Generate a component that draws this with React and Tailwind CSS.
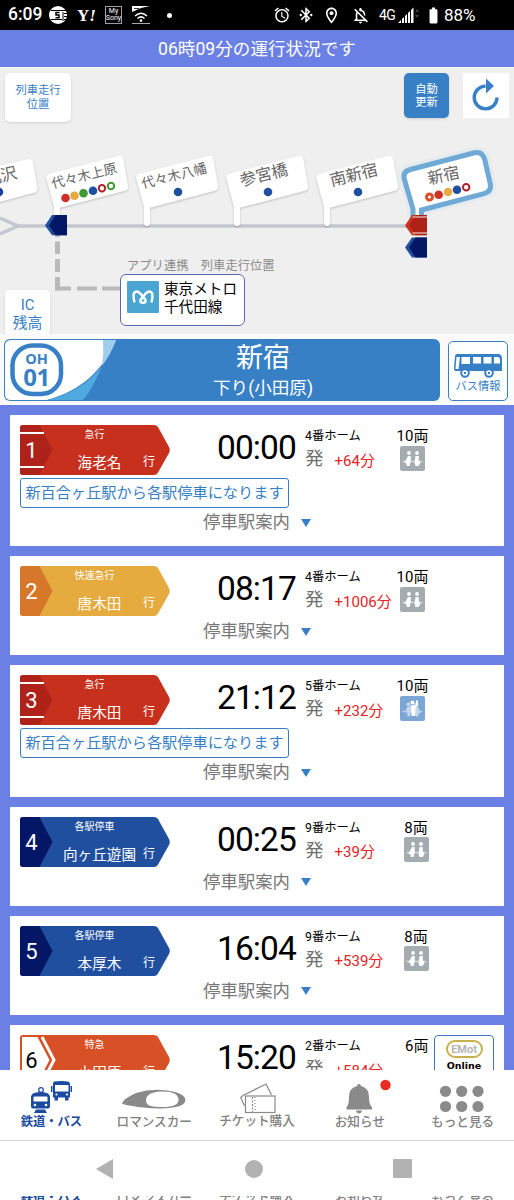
import React from "react";
import {
  MdAlarm,
  MdBluetoothConnected,
  MdOutlineLocationOn,
  MdOutlineNotificationsOff,
  MdBatteryFull,
} from "react-icons/md";

function StatusBar() {
  return (
    <div className="flex h-[30px] shrink-0 items-center bg-black pl-2 text-white">
      <span className="w-[34px] text-[17.5px] leading-none font-medium">6:09</span>
      <svg className="ml-[7px]" width="19" height="18" viewBox="0 0 19 18">
        <circle cx="9" cy="9" r="9" fill="#fff" />
        <path d="M2 4.500H19M2 13.500H13M14 6v9M15 7.500h4M15 10.500h4M15 13.500h4" stroke="#000" strokeWidth="1" />
        <path d="M10.500 6.500H7v2.600h3v2.700H6.500" stroke="#000" strokeWidth="1.500" fill="none" />
      </svg>
      <span className="ml-[9px] w-[20px] font-['Liberation_Serif',serif] text-[17px] leading-none font-bold whitespace-nowrap">
        Y<i>!</i>
      </span>
      <span className="ml-[8px] flex h-[18px] w-[17px] flex-col items-center justify-center border border-neutral-400 text-[7px] leading-[7px]">
        <span>My</span>
        <span>Sony</span>
      </span>
      <svg className="ml-[10px]" width="18" height="18" viewBox="0 0 18 18" fill="none" stroke="#fff">
        <path d="M0 0H18L9 2L0 6z" fill="#fff" stroke="none" />
        <path d="M2 2.5h5" stroke="#333" />
        <path d="M3 10q6-5.500 12 0M5.500 12.500q3.500-3.200 7 0" strokeWidth="1.500" />
        <circle cx="9" cy="14.600" r="1.300" fill="#fff" stroke="none" />
        <path d="M0 17.500H18" stroke="#aaa" />
      </svg>
      <span className="ml-[17px] size-[5px] rounded-full bg-white" />
      <MdAlarm className="ml-[101px] size-[18px]" />
      <MdBluetoothConnected className="ml-[6px] size-[18px]" />
      <MdOutlineLocationOn className="ml-[7px] size-[19px]" />
      <MdOutlineNotificationsOff className="ml-[10px] size-[19px]" />
      <span className="ml-[9px] w-[18px] text-[14px] leading-none tracking-[-0.5px]">4G</span>
      <svg className="ml-px" width="22" height="17" viewBox="0 0 22 17">
        <path d="M0 16L3 13v3zM4 12l2-2v6H4zM7 9l2-2v9H7zM10 6l2-2v12h-2zM13 3l2.500-2.500V16H13z" fill="#fff" />
        <path d="M17 5l2-3 2 3zM17 8l2 3 2-3z" fill="#444" />
      </svg>
      <MdBatteryFull className="ml-[4px] size-[19px]" />
      <span className="ml-[1px] text-[17px] leading-none">88%</span>
    </div>
  );
}

const SIGN = "M144 207L136.300 178.500Q135.400 174.700 139 173.700L208.500 155.800Q212.400 154.900 213.400 158.800L218 186Q218.600 189.700 215 190.700L150 207.800V223a3 3 0 0 1-6 0z";
const CURRENT = "M413 222V209L404.300 179Q402.500 171.500 410.500 169.500L473.500 153Q482 150.500 484.700 159.500L490.300 184Q491.700 191.500 484 193.700L421.500 210V222";

const signs = [
  { dx: -90, label: "代々木上原", size: 13.4 },
  { dx: 0, label: "代々木八幡", size: 13.4, dot: true },
  { dx: 90, label: "参宮橋", size: 16.3, dot: true },
  { dx: 180, label: "南新宿", size: 16.3, dot: true },
];

function LineMap() {
  return (
    <svg className="absolute inset-0" width="514" height="266" viewBox="0 68 514 266">
      <path d="M0 218L18 226L0 234" fill="none" stroke="#c6c7ce" strokeWidth="3.500" />
      <path d="M15 226H410" stroke="#c6c7ce" strokeWidth="3.500" />
      <path d="M57.500 234V237M57.500 241.500V254M57.500 259V272M57.500 277V290.500" stroke="#b9b9b9" strokeWidth="5" />
      <path d="M55 288.500H71M77 288.500H97M102 288.500H121" stroke="#b9b9b9" strokeWidth="4" />
      <g style={{ filter: "drop-shadow(0 1px 1px rgba(0,0,0,.2))" }} fill="#fff">
        <path d="M-34 173L28 159Q32 158.300 33 162L37.500 188Q38 191.500 35 192.500L-34 211z" />
        {signs.map((s) => (
          <path key={s.label} d={SIGN} transform={`translate(${s.dx} 0)`} />
        ))}
      </g>
      <g fill="#666" textAnchor="middle">
        <text x="-7" y="184" fontSize="16.300" transform="rotate(-14 -7 178)">下北沢</text>
        {signs.map((s) => (
          <g key={s.label} transform={`translate(${s.dx} 0)`}>
            <text x="174" y="180.500" fontSize={s.size} transform="rotate(-14 174 175.500)">
              {s.label}
            </text>
            {s.dot && <circle cx="178" cy="192" r="4.300" fill="#1f4f9e" />}
          </g>
        ))}
      </g>
      <circle cx="-1" cy="192" r="4.300" fill="#1f3f9e" />
      <circle cx="65.500" cy="198" r="4.300" fill="#cf3028" />
      <circle cx="74.500" cy="195.800" r="4.300" fill="#e7a944" />
      <circle cx="83.500" cy="193.200" r="4.300" fill="#3f9a33" />
      <circle cx="93" cy="190.700" r="4.300" fill="#1f4f9e" />
      <circle cx="102" cy="188.300" r="3.200" fill="#fff" stroke="#b3202a" strokeWidth="2" />
      <circle cx="111" cy="186" r="3.200" fill="#fff" stroke="#3f9a33" strokeWidth="2" />

      <path d={CURRENT} fill="none" stroke="#e4ebef" strokeWidth="11" />
      <path d={CURRENT} fill="#fff" stroke="#6fa9d6" strokeWidth="5" />
      <text x="443.500" y="181" fontSize="16" fill="#666" textAnchor="middle" transform="rotate(-12 443.500 175)">新宿</text>
      <circle cx="429.500" cy="197" r="3" fill="#fff" stroke="#dc5028" strokeWidth="3" />
      <circle cx="438.700" cy="194.700" r="4.300" fill="#cb3426" />
      <circle cx="448" cy="192" r="4.300" fill="#e7a944" />
      <circle cx="457" cy="189.700" r="4.300" fill="#1f4f9e" />
      <circle cx="466.200" cy="187.200" r="3.200" fill="#fff" stroke="#b3202a" strokeWidth="2" />

      <path d="M45 225.500L52 215H67V235.300H52z" fill="#1f4f9e" />
      <path d="M49 225.500L55.500 215H67V235.300H55.500z" fill="#041766" />
      <path d="M405 225.500L412 215H427V235.300H412z" fill="#cc321f" />
      <path d="M409 225.500L415.500 215H427V235.300H415.500z" fill="#ae2116" />
      <path d="M412.500 217H427M412.500 233H427" stroke="#fff" strokeWidth="1.200" opacity=".9" />
      <path d="M405 247.500L412 237.500H427V257.500H412z" fill="#1f4f9e" />
      <path d="M409 247.500L415.500 237.500H427V257.500H415.500z" fill="#041766" />
    </svg>
  );
}

function MapPanel() {
  return (
    <div className="relative h-[266px] shrink-0 overflow-hidden bg-[#efefef]">
      <LineMap />
      <div className="relative flex items-start pt-[5px] pl-[5px]">
        <button className="h-[49px] w-[66px] rounded-[5px] bg-white text-[11.3px] leading-[13.5px] text-[#3880c6] shadow">
          列車走行
          <br />
          位置
        </button>
        <button className="ml-[333px] h-[45px] w-[45px] rounded-[5px] bg-[#3880c6] text-[11.300px] leading-[13px] text-white shadow">
          自動
          <br />
          更新
        </button>
        <button className="ml-[14px] h-[45px] w-[46px] bg-white">
          <svg width="46" height="45" viewBox="0 0 46 45">
            <path d="M34 24.500A11.400 11.400 0 1 1 22.600 13.100" fill="none" stroke="#3880c6" strokeWidth="3.400" />
            <path d="M23 5.500L31 13L23 20.500z" fill="#3880c6" />
          </svg>
        </button>
      </div>
      <div className="absolute top-[190px] left-[127px] text-[12.300px] leading-[16px] whitespace-nowrap text-[#8a8a8a]">
        アプリ連携　列車走行位置
      </div>
      <div className="absolute top-[206px] left-[120px] flex h-[52px] w-[125px] rounded-[6px] border-[1.500px] border-[#5a68b4] bg-white pt-[6px] pl-[6px]">
        <svg width="32" height="32" viewBox="0 0 32 32">
          <rect width="32" height="32" rx="1" fill="#4aa5d2" />
          <path
            d="M7.500 21.500Q4.800 11 9.500 10.500C13.500 10.500 15 15.500 18.300 18.500Q19.500 21.800 16 21.800Q12.500 21.800 13.700 18.500C17 15.500 18.500 10.500 22.500 10.500Q27.200 11 24.500 21.500"
            fill="none"
            stroke="#fff"
            strokeWidth="2.400"
          />
        </svg>
        <div className="ml-[5px] text-[14.600px] leading-[17.500px] whitespace-nowrap text-black">
          東京メトロ
          <br />
          千代田線
        </div>
      </div>
      <button className="absolute top-[222px] left-[5px] h-[45px] w-[45px] rounded-[4px] bg-white pt-[2px] text-[14.800px] leading-[18px] text-[#3880c6] shadow">
        IC
        <br />
        残高
      </button>
    </div>
  );
}

function StationHeader() {
  return (
    <div className="flex h-[71px] shrink-0 items-start bg-[#fafafa] pt-[5px] pl-[4px]">
      <div className="relative h-[62px] w-[436px] overflow-hidden rounded-[6px] bg-[#3880c6]">
        <svg className="absolute inset-0" width="436" height="62" viewBox="0 0 436 62">
          <path d="M7 1H112C98 32 78 51 43 61H7Q1 61 1 55V7Q1 1 7 1z" fill="#fff" />
          <path d="M99 1H112Q107 15 98 27Q100 14 99 1z" fill="#9fcdec" />
          <path d="M98 27C91 43 86 53 79 61H43C66 56 86 43 98 27z" fill="#4fa9df" />
          <rect x="8.500" y="6.500" width="48.500" height="48.500" rx="20" fill="none" stroke="#3880c6" strokeWidth="4.500" />
        </svg>
        <div className="absolute top-[13px] left-[7px] flex w-[51px] flex-col items-center font-['Open_Sans','Noto_Sans',sans-serif] font-bold text-[#3880c6]">
          <span className="text-[14.500px] leading-[13px]">OH</span>
          <span className="text-[24px] leading-[23px] tracking-[-0.500px]">01</span>
        </div>
        <div className="relative flex flex-col items-center pl-[82px] text-white">
          <span className="mt-[3px] text-[27px] leading-[33px]">新宿</span>
          <span className="text-[17.600px] leading-[27px]">下り(小田原)</span>
        </div>
      </div>
      <div className="mt-[2px] ml-[8px] flex h-[60px] w-[60px] flex-col items-center rounded-[5px] border border-[#3880c6] bg-white">
        <svg className="mt-[11px]" width="50" height="26" viewBox="0 0 50 26">
          <path d="M4 1H45Q49 1 49 6V18H2Q1 18 1 15L2 3Q2.500 1 4 1z" fill="#3880c6" />
          <path d="M3.500 4H7L5.500 16H2.500zM8.500 4h8.500v7H8.500zM20 4h8v6.500H20zM30.500 4h8v6.500H30.500zM41 4h4Q47 4 47 6.500V10.500H41z" fill="#fff" />
          <circle cx="12" cy="20" r="3.800" fill="#fff" stroke="#3880c6" strokeWidth="2" />
          <circle cx="36" cy="20" r="3.800" fill="#fff" stroke="#3880c6" strokeWidth="2" />
          <circle cx="12" cy="20" r="1.200" fill="#3880c6" />
          <circle cx="36" cy="20" r="1.200" fill="#3880c6" />
        </svg>
        <span className="text-[11.200px] leading-[15px] text-[#3880c6]">バス情報</span>
      </div>
    </div>
  );
}

const kinds = {
  express: { main: "#c8301e", dark: "#ae2219", bars: true },
  rapid: { main: "#e5ab3f", dark: "#d6772a" },
  local: { main: "#1f4f9e", dark: "#041766" },
  limited: { main: "#d85025", dark: "#ffffff", outline: true },
};

function TrainBadge({ n, kind, type, dest }) {
  const k = kinds[kind];
  return (
    <div className="relative h-[50px] w-[150px] shrink-0 text-white">
      <svg className="absolute inset-0" width="150" height="50" viewBox="0 0 150 50">
        <path d="M3 0H134Q136.500 0 138 2L149 22Q150.500 25 149 28L138 47.500Q136.500 50 134 50H3Q0 50 0 47V3Q0 0 3 0z" fill={k.main} />
        {k.outline ? (
          <>
            <path d="M2 2H17.500L29.500 25L17.500 48H2z" fill="#fff" />
            <path d="M22 2L34 25L22 48" fill="none" stroke="#fff" strokeWidth="3" />
          </>
        ) : (
          <path d="M3 0H19.500L32.500 25L19.500 50H3Q0 50 0 47V3Q0 0 3 0z" fill={k.dark} />
        )}
        {k.bars && <path d="M0 8H24M0 42H24" stroke="#fff" strokeWidth="2" />}
      </svg>
      <div className="relative grid h-full grid-cols-[23px_115px] items-center">
        <span className={k.outline ? "pt-[2px] text-center text-[22px] leading-none text-black" : "pt-[2px] text-center text-[22px] leading-none"}>
          {n}
        </span>
        <div className="relative h-full">
          <div className="mr-[12px] pt-[3px] text-center text-[10px] leading-[14px]">{type}</div>
          <div className="mt-[12px] text-center text-[14.600px] leading-[18px]">
            <span className="mr-0.5">{dest}</span>
          </div>
          <span className="absolute top-[28px] right-[3px] text-[12px] leading-[18px]">行</span>
        </div>
      </div>
    </div>
  );
}

function Crowding({ busy }) {
  return (
    <svg width="25" height="25" viewBox="0 0 25 25">
      <rect width="25" height="25" rx="2" fill={busy ? "#7ba6d5" : "#a5acb0"} />
      <path d="M2.500 15.500H22.500" stroke={busy ? "#b7cfe8" : "#d3d7d9"} strokeWidth="1.500" />
      {busy ? (
        <>
          <g fill="#c4d8ed">
            <circle cx="8.500" cy="8.500" r="2" />
            <path d="M7 11h4l-1 9.500H7.500L7 14l-2.500 4z" />
            <circle cx="16.500" cy="8.500" r="2" />
            <path d="M15 11h3.500l2 7-2-1v3.500h-2.500z" />
          </g>
          <g fill="#fff">
            <circle cx="12.500" cy="6.500" r="2" />
            <path d="M10.500 9.500L14.500 9l1.500-.5V4.500h2l-.2 5.500-2.300 1.500V20h-4z" />
          </g>
        </>
      ) : (
        <g fill="#fff">
          <circle cx="9" cy="7" r="1.900" />
          <path d="M8 10H10.800V15L9.500 20H6.800L6.500 17.500L4.500 16.500z" />
          <circle cx="17" cy="7" r="1.900" />
          <path d="M15.500 10H18.800V14L20.500 17L18.500 20H15.500L14.500 16.500z" />
        </g>
      )}
    </svg>
  );
}

function TrainCard({ t }) {
  return (
    <div className={t.note ? "h-[131.250px] shrink-0 bg-white px-[10px] pt-[10px]" : "h-[99.200px] shrink-0 bg-white px-[10px] pt-[10px]"}>
      <div className="flex h-[50px]">
        <TrainBadge n={t.n} kind={t.kind} type={t.type} dest={t.dest} />
        <span className="ml-[47px] w-[88px] pt-[3px] text-[33.500px] leading-[40px] tracking-[-0.900px] text-black">{t.time}</span>
        <div className="flex w-[92px] flex-col pt-[3px] whitespace-nowrap">
          <span className="text-[12.300px] leading-[16px] text-black">{t.platform}番ホーム</span>
          <div className="mt-[3px] flex items-center">
            <span className="text-[18.500px] leading-[24px] text-[#707070]">発</span>
            <span className="mt-[3px] ml-[11px] text-[15px] leading-[20px] text-[#e6231f]">+{t.delay}分</span>
          </div>
        </div>
        <div className="flex w-[31.500px] justify-end">
          <div className="flex flex-col items-center">
            <span className="pt-[2px] text-[15px] leading-[18.500px] whitespace-nowrap text-black">{t.cars}両</span>
            {!t.emot && <Crowding busy={t.busy} />}
          </div>
        </div>
        {t.emot && (
          <div className="ml-[5.500px] flex h-[60px] w-[60px] shrink-0 flex-col items-center rounded-[4px] border border-[#4a72c4] bg-white pt-[4px]">
            <span className="flex h-[18px] w-[37px] items-center justify-center rounded-full border-2 border-[#c9b04e] bg-white text-[11px] leading-none font-bold text-[#b5b5b5]">
              EMot
            </span>
            <span className="mt-[1px] font-['DejaVu_Sans',sans-serif] text-[9.500px] leading-[13px] font-bold text-black">Online</span>
          </div>
        )}
      </div>
      {t.note && (
        <div className="mt-[3px] flex h-[30px] w-[269px] items-center justify-center rounded-[3px] border border-[#3880c6] text-[15.200px] whitespace-nowrap text-[#3880c6]">
          {t.note}
        </div>
      )}
      <div className={t.note ? "mt-[1px] flex items-center pl-[183px]" : "mt-[2px] flex items-center pl-[183px]"}>
        <span className="text-[17.400px] leading-[27px] text-[#777]">停車駅案内</span>
        <svg className="ml-[11px]" width="10" height="8" viewBox="0 0 10 8">
          <path d="M0 0H10L5 8z" fill="#3880c6" />
        </svg>
      </div>
    </div>
  );
}

const note = "新百合ヶ丘駅から各駅停車になります";
const trains = [
  { n: 1, kind: "express", type: "急行", dest: "海老名", time: "00:00", platform: 4, delay: 64, cars: 10, note },
  { n: 2, kind: "rapid", type: "快速急行", dest: "唐木田", time: "08:17", platform: 4, delay: 1006, cars: 10 },
  { n: 3, kind: "express", type: "急行", dest: "唐木田", time: "21:12", platform: 5, delay: 232, cars: 10, note, busy: true },
  { n: 4, kind: "local", type: "各駅停車", dest: "向ヶ丘遊園", time: "00:25", platform: 9, delay: 39, cars: 8 },
  { n: 5, kind: "local", type: "各駅停車", dest: "本厚木", time: "16:04", platform: 9, delay: 539, cars: 8 },
  { n: 6, kind: "limited", type: "特急", dest: "小田原", time: "15:20", platform: 2, delay: 584, cars: 6, emot: true },
];

const tabIcons = {
  train: (
    <g fill="#1b4ba0">
      <g transform="translate(0 -1.5)">
        <circle cx="41" cy="11.500" r="2.300" fill="none" stroke="#1b4ba0" strokeWidth="1.200" />
        <path d="M34 14.500Q41 12.500 47 14.500Q50 16 50 19V28Q50 30 48 30H33Q31 30 31 28V19Q31 16 34 14.500zM36 31h9l2 3.500H34z" />
        <path d="M33.500 19Q33.500 18 34.500 18H46.500Q47.500 18 47.500 19V23H33.500z" fill="#fff" />
        <circle cx="35" cy="26.500" r="1.300" fill="#fff" />
        <circle cx="46" cy="26.500" r="1.300" fill="#fff" />
      </g>
      <path d="M54 1.500Q61.500 .5 68 1.500Q70 2 70 4V17.500H68.500V20.500H65V17.500H58V20.500H54.500V17.500H53V4Q53 2 54 1.500zM51 6h1.500v6H51zM70.500 6H72v6h-1.500z" />
      <path d="M55 5H68.500V11.500H55z" fill="#fff" />
      <circle cx="56.500" cy="14.500" r="1.100" fill="#fff" />
      <circle cx="67" cy="14.500" r="1.100" fill="#fff" />
    </g>
  ),
  car: (
    <g>
      <path d="M19 23.500Q20 19 33 13Q51 7.500 70 11.500Q82 14 82.500 20Q82 26 70 27.500Q58 29.500 40 27.500Q20 25 19 23.500z" fill="#8a8a8a" />
      <path d="M43 20.500C43 14 50 11.500 60 11.500C70 11.500 75.500 14.500 75.500 19.500C75.500 25 70 27 60 27C50 27 43 26.500 43 20.500z" fill="#fff" />
    </g>
  ),
  ticket: (
    <g fill="none" stroke="#8a8a8a" strokeWidth="1.200">
      <path d="M38.500 26L34.700 17.500L37 15.500L60 4L65.500 15" />
      <rect x="39.500" y="16" width="29.500" height="16.500" fill="#fff" />
      <path d="M46.500 17v15" strokeDasharray="2 1.500" />
      <path d="M49 17v15" strokeDasharray="1 2" />
    </g>
  ),
  bell: (
    <g fill="#8a8a8a">
      <path d="M51 4Q53 4 53 6Q61 8 61 17Q61 25 64 27V29.500H38.500V27Q41 25 41 17Q41 8 49 6Q49 4 51 4z" />
      <path d="M48 30.500H54Q53.500 33.500 51 33.500Q48.500 33.500 48 30.500z" />
      <circle cx="77.500" cy="5" r="5.200" fill="#e52d23" />
    </g>
  ),
  more: (
    <g fill="#8a8a8a">
      <circle cx="34.500" cy="11.300" r="5.600" />
      <circle cx="50.700" cy="11.300" r="5.600" />
      <circle cx="67" cy="11.300" r="5.600" />
      <circle cx="34.500" cy="26.500" r="5.600" />
      <circle cx="50.700" cy="26.500" r="5.600" />
      <circle cx="67" cy="26.500" r="5.600" />
    </g>
  ),
};

const tabs = [
  { icon: "train", label: "鉄道・バス", active: true },
  { icon: "car", label: "ロマンスカー" },
  { icon: "ticket", label: "チケット購入", raised: true },
  { icon: "bell", label: "お知らせ" },
  { icon: "more", label: "もっと見る" },
];

function labelClass(t) {
  if (t.active) return "text-center text-[12.300px] leading-[18px] font-bold text-[#1b4ba0]";
  if (t.raised) return "-mt-px text-center text-[12.600px] leading-[18px] font-medium text-[#808080]";
  return "text-center text-[12.600px] leading-[18px] font-medium text-[#808080]";
}

function TabLabels() {
  return tabs.map((t) => (
    <span key={t.label} className={labelClass(t)}>
      {t.label}
    </span>
  ));
}

function TabBar() {
  return (
    <div className="h-[71px] shrink-0 border-b border-[#d8d8d8] bg-white pt-[10px]">
      <div className="grid w-[514px] grid-cols-5">
        {tabs.map((t) => (
          <svg key={t.icon} className="overflow-visible" width="102" height="33" viewBox="0 0 102 33">
            {tabIcons[t.icon]}
          </svg>
        ))}
        <TabLabels />
      </div>
    </div>
  );
}

function SystemNav() {
  return (
    <div className="flex h-[55px] shrink-0 items-center justify-between bg-white pr-[102px] pl-[96px]">
      <svg width="18" height="20" viewBox="0 0 18 20">
        <path d="M17 0V20L0 10z" fill="#b2b2b2" />
      </svg>
      <span className="size-[18px] rounded-full bg-[#b2b2b2]" />
      <span className="size-[19px] rounded-[1px] bg-[#b2b2b2]" />
    </div>
  );
}

export default function App() {
  return (
    <div className="flex h-[1200px] w-[514px] flex-col overflow-hidden bg-white font-[Roboto,'Noto_Sans_CJK_JP',sans-serif]">
      <StatusBar />
      <div className="flex h-[38px] shrink-0 items-center justify-center border-b border-white bg-[#6a80e5] pt-px text-[17.600px] text-white">
        06時09分の運行状況です
      </div>
      <MapPanel />
      <StationHeader />
      <div className="flex h-[665px] shrink-0 flex-col gap-[10px] overflow-hidden bg-[#6a80e5] px-[10px] pt-[10px]">
        {trains.map((t) => (
          <TrainCard key={t.n} t={t} />
        ))}
      </div>
      <TabBar />
      <SystemNav />
      <div className="grid h-[4px] grid-cols-5 content-center overflow-hidden">
        <TabLabels />
      </div>
    </div>
  );
}
